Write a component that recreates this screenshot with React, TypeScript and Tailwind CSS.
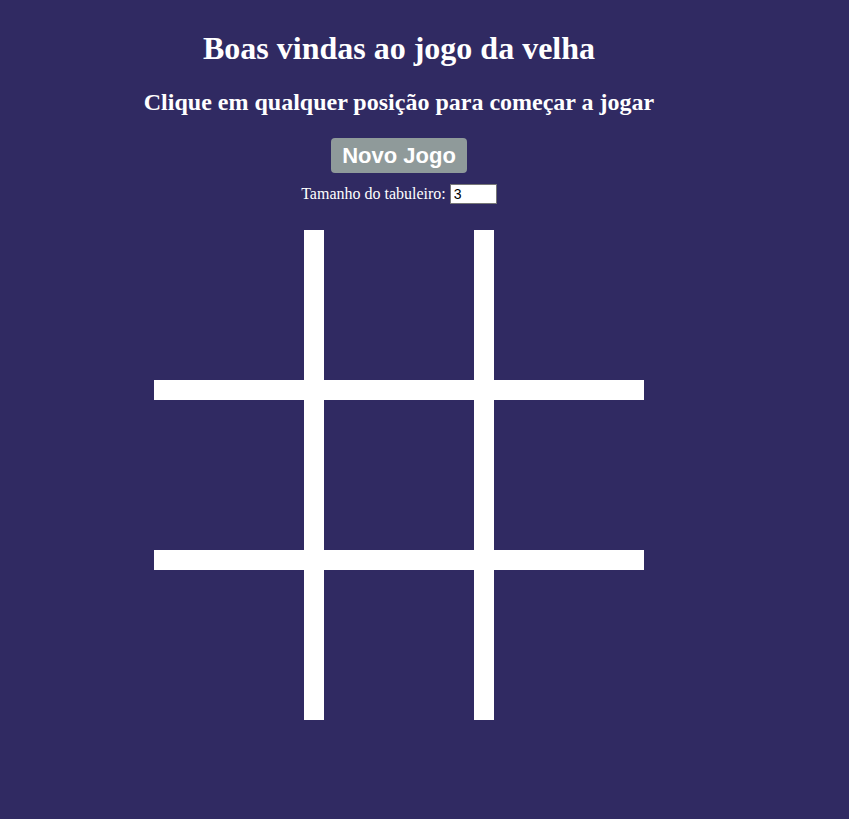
import React from "react";

export default function App() {
  const cells = Array.from({ length: 9 }, (_, i) => i);
  const cls = [
    "border-r-[20px] border-b-[20px] w-[170px] h-[170px]",
    "border-r-[20px] border-b-[20px] w-[170px] h-[170px]",
    "border-b-[20px] w-[150px] h-[170px]",
    "border-r-[20px] border-b-[20px] w-[170px] h-[170px]",
    "border-r-[20px] border-b-[20px] w-[170px] h-[170px]",
    "border-b-[20px] w-[150px] h-[170px]",
    "border-r-[20px] w-[170px] h-[150px]",
    "border-r-[20px] w-[170px] h-[150px]",
    "w-[150px] h-[150px]",
  ];
  return (
    <div className="min-h-[819px] w-full bg-[#302a62] text-white" style={{ fontFamily: '"Liberation Serif", serif' }}>
      <div className="w-[798px] flex flex-col items-center pt-[30px]">
        <h1 className="text-[32px] leading-[37px] font-bold">Boas vindas ao jogo da velha</h1>
        <h2 className="mt-[21px] text-[24px] leading-[28px] font-bold">Clique em qualquer posição para começar a jogar</h2>
        <button
          className="mt-[22px] w-[136px] h-[35px] rounded-[4px] bg-[#8f9a9a] text-white text-[22px] font-bold leading-none"
          style={{ fontFamily: '"Liberation Sans", Arial, sans-serif' }}
        >
          Novo Jogo
        </button>
        <div className="mt-[11px] flex items-center h-[20px] text-[16px]">
          <span>Tamanho do tabuleiro:</span>
          <input
            type="number"
            defaultValue={3}
            className="ml-[4px] w-[47px] h-[20px] bg-white text-black border border-[#767676] px-[3px] text-[14px] [appearance:textfield]"
            style={{ fontFamily: '"Liberation Sans", Arial, sans-serif' }}
          />
        </div>
        <div className="mt-[26px] grid grid-cols-[170px_170px_150px] w-[490px]">
          {cells.map((i) => (
            <div key={i} className={`border-white box-border ${cls[i]}`} />
          ))}
        </div>
      </div>
    </div>
  );
}
